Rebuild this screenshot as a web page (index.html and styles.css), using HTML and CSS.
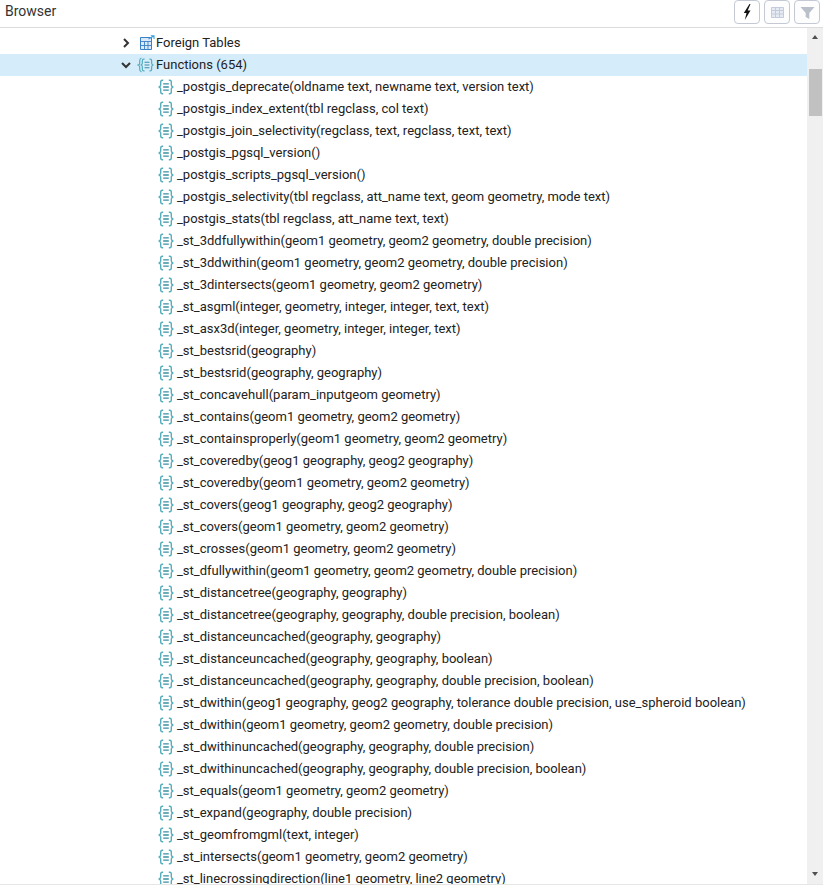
FILE: index.html
```html
<!DOCTYPE html>
<html lang="en">
<head>
<meta charset="utf-8">
<title>Browser</title>
<link rel="stylesheet" href="styles.css">
</head>
<body>
<svg class="defs" width="0" height="0" aria-hidden="true">
  <symbol id="fn" viewBox="0 0 16 16">
    <path d="M5.200 1.200H4.300C3 1.200 2.700 2 2.700 3.200V6C2.700 7 2.100 7.700.7 8C2.100 8.300 2.700 9 2.700 10V12.800C2.700 14 3 14.800 4.300 14.800H5.200M10.800 1.200H11.700C13 1.200 13.300 2 13.300 3.200V6C13.300 7 13.900 7.700 15.300 8C13.900 8.300 13.300 9 13.300 10V12.800C13.300 14 13 14.800 11.700 14.800H10.800" fill="none" stroke="#55aebc" stroke-width="1.400"/>
    <path d="M5.200 4.800H10.800M5.200 8H10.800M5.200 11.200H10.800" fill="none" stroke="#3a8fa3" stroke-width="1.300"/>
  </symbol>
</svg>
<div class="panel">
  <header class="bar">
    <span class="title">Browser</span>
    <div class="tools">
      <button class="tool"><svg width="16" height="18" viewBox="0 0 16 18"><path d="M10.500 1 4.800 10H7.500L5.800 17 11.500 7.500H8.700L11.500 1Z" fill="#111"/></svg></button>
      <button class="tool off"><svg width="15" height="15" viewBox="0 0 15 15"><path d="M1.500 2.500H13.500V12.500H1.500ZM1.500 5.500H13.500M1.500 9H13.500M5.500 2.500V12.500M9.500 2.500V12.500" fill="#e6eaf3" stroke="#c3cbdc"/></svg></button>
      <button class="tool off"><svg width="15" height="15" viewBox="0 0 15 15"><path d="M.5 2H14.500L9.300 8V14L5.700 12V8Z" fill="#b9c0ca"/></svg></button>
    </div>
  </header>
  <div class="body">
    <div class="tree">
      <div class="row lvl1">
        <svg class="chev" width="10" height="10" viewBox="0 0 10 10"><path d="M3 1 7 5 3 9" fill="none" stroke="#333" stroke-width="2"/></svg>
        <svg class="ic" width="16" height="16" viewBox="0 0 16 16"><path d="M1.500 2.500H12.500V14.500H1.500Z" fill="#dbe9f9" stroke="#3a80c4"/><path d="M1.500 6.500H12.500M5.500 6.500V14.500M9 6.500V14.500M1.500 10.500H12.500" fill="none" stroke="#3a80c4" stroke-width=".9"/><path d="M9.500 4 14.800 1M11.800 .8H15V4" fill="none" stroke="#39a0dc" stroke-width="1.100"/></svg>
        <span>Foreign Tables</span>
      </div>
      <div class="row lvl1 sel">
        <svg class="chev" width="10" height="10" viewBox="0 0 10 10"><path d="M1 3 5 7 9 3" fill="none" stroke="#333" stroke-width="2"/></svg>
        <svg class="ic" width="18" height="16" viewBox="0 0 18 16"><path d="M4.500 1C2.800 1.500 2.700 3 2.700 4V6C2.700 7 2.100 7.700 1 8C2.100 8.300 2.700 9 2.700 10V12C2.700 13 2.800 14.500 4.500 15" fill="none" stroke="#55aebc" stroke-width="1.200"/><use href="#fn" x="3" y="1" width="14" height="14"/></svg>
        <span class="fn-label">Functions (654)</span>
      </div>
      <div class="row lvl2"><svg class="ic"><use href="#fn"/></svg><span>_postgis_deprecate(oldname text, newname text, version text)</span></div>
      <div class="row lvl2"><svg class="ic"><use href="#fn"/></svg><span>_postgis_index_extent(tbl regclass, col text)</span></div>
      <div class="row lvl2"><svg class="ic"><use href="#fn"/></svg><span>_postgis_join_selectivity(regclass, text, regclass, text, text)</span></div>
      <div class="row lvl2"><svg class="ic"><use href="#fn"/></svg><span>_postgis_pgsql_version()</span></div>
      <div class="row lvl2"><svg class="ic"><use href="#fn"/></svg><span>_postgis_scripts_pgsql_version()</span></div>
      <div class="row lvl2"><svg class="ic"><use href="#fn"/></svg><span>_postgis_selectivity(tbl regclass, att_name text, geom geometry, mode text)</span></div>
      <div class="row lvl2"><svg class="ic"><use href="#fn"/></svg><span>_postgis_stats(tbl regclass, att_name text, text)</span></div>
      <div class="row lvl2"><svg class="ic"><use href="#fn"/></svg><span>_st_3ddfullywithin(geom1 geometry, geom2 geometry, double precision)</span></div>
      <div class="row lvl2"><svg class="ic"><use href="#fn"/></svg><span>_st_3ddwithin(geom1 geometry, geom2 geometry, double precision)</span></div>
      <div class="row lvl2"><svg class="ic"><use href="#fn"/></svg><span>_st_3dintersects(geom1 geometry, geom2 geometry)</span></div>
      <div class="row lvl2"><svg class="ic"><use href="#fn"/></svg><span>_st_asgml(integer, geometry, integer, integer, text, text)</span></div>
      <div class="row lvl2"><svg class="ic"><use href="#fn"/></svg><span>_st_asx3d(integer, geometry, integer, integer, text)</span></div>
      <div class="row lvl2"><svg class="ic"><use href="#fn"/></svg><span>_st_bestsrid(geography)</span></div>
      <div class="row lvl2"><svg class="ic"><use href="#fn"/></svg><span>_st_bestsrid(geography, geography)</span></div>
      <div class="row lvl2"><svg class="ic"><use href="#fn"/></svg><span>_st_concavehull(param_inputgeom geometry)</span></div>
      <div class="row lvl2"><svg class="ic"><use href="#fn"/></svg><span>_st_contains(geom1 geometry, geom2 geometry)</span></div>
      <div class="row lvl2"><svg class="ic"><use href="#fn"/></svg><span>_st_containsproperly(geom1 geometry, geom2 geometry)</span></div>
      <div class="row lvl2"><svg class="ic"><use href="#fn"/></svg><span>_st_coveredby(geog1 geography, geog2 geography)</span></div>
      <div class="row lvl2"><svg class="ic"><use href="#fn"/></svg><span>_st_coveredby(geom1 geometry, geom2 geometry)</span></div>
      <div class="row lvl2"><svg class="ic"><use href="#fn"/></svg><span>_st_covers(geog1 geography, geog2 geography)</span></div>
      <div class="row lvl2"><svg class="ic"><use href="#fn"/></svg><span>_st_covers(geom1 geometry, geom2 geometry)</span></div>
      <div class="row lvl2"><svg class="ic"><use href="#fn"/></svg><span>_st_crosses(geom1 geometry, geom2 geometry)</span></div>
      <div class="row lvl2"><svg class="ic"><use href="#fn"/></svg><span>_st_dfullywithin(geom1 geometry, geom2 geometry, double precision)</span></div>
      <div class="row lvl2"><svg class="ic"><use href="#fn"/></svg><span>_st_distancetree(geography, geography)</span></div>
      <div class="row lvl2"><svg class="ic"><use href="#fn"/></svg><span>_st_distancetree(geography, geography, double precision, boolean)</span></div>
      <div class="row lvl2"><svg class="ic"><use href="#fn"/></svg><span>_st_distanceuncached(geography, geography)</span></div>
      <div class="row lvl2"><svg class="ic"><use href="#fn"/></svg><span>_st_distanceuncached(geography, geography, boolean)</span></div>
      <div class="row lvl2"><svg class="ic"><use href="#fn"/></svg><span>_st_distanceuncached(geography, geography, double precision, boolean)</span></div>
      <div class="row lvl2"><svg class="ic"><use href="#fn"/></svg><span>_st_dwithin(geog1 geography, geog2 geography, tolerance double precision, use_spheroid boolean)</span></div>
      <div class="row lvl2"><svg class="ic"><use href="#fn"/></svg><span>_st_dwithin(geom1 geometry, geom2 geometry, double precision)</span></div>
      <div class="row lvl2"><svg class="ic"><use href="#fn"/></svg><span>_st_dwithinuncached(geography, geography, double precision)</span></div>
      <div class="row lvl2"><svg class="ic"><use href="#fn"/></svg><span>_st_dwithinuncached(geography, geography, double precision, boolean)</span></div>
      <div class="row lvl2"><svg class="ic"><use href="#fn"/></svg><span>_st_equals(geom1 geometry, geom2 geometry)</span></div>
      <div class="row lvl2"><svg class="ic"><use href="#fn"/></svg><span>_st_expand(geography, double precision)</span></div>
      <div class="row lvl2"><svg class="ic"><use href="#fn"/></svg><span>_st_geomfromgml(text, integer)</span></div>
      <div class="row lvl2"><svg class="ic"><use href="#fn"/></svg><span>_st_intersects(geom1 geometry, geom2 geometry)</span></div>
      <div class="row lvl2"><svg class="ic"><use href="#fn"/></svg><span>_st_linecrossingdirection(line1 geometry, line2 geometry)</span></div>
    </div>
    <div class="scroll">
      <div class="arrow up"></div>
      <div class="track"><div class="thumb"></div></div>
      <div class="arrow down"></div>
    </div>
  </div>
  <div class="foot"></div>
</div>
</body>
</html>
```
FILE: styles.css
```css
* { box-sizing: border-box; }
html, body { margin: 0; height: 100%; overflow: hidden; background: #fff; }
body { font-family: Roboto, "Liberation Sans", sans-serif; font-size: 13px; color: #222; }
.defs { position: absolute; }
.panel { height: 885px; display: flex; flex-direction: column; }
.bar {
  height: 28px; flex: none; display: flex; align-items: flex-start; justify-content: space-between;
  padding: 0 3px 0 5px; border-bottom: 1px solid #dcdcdc;
}
.title { font-size: 14px; line-height: 22px; color: #333; }
.tools { display: flex; gap: 4px; }
.tool {
  width: 26px; height: 24px; padding: 0; display: flex; align-items: center; justify-content: center;
  background: #fff; border: 1px solid #c4c9d4; border-radius: 4px;
}
.tool.off { background: #fdfdfd; }
.body { flex: 1; min-height: 0; display: flex; }
.tree { flex: 1; min-width: 0; overflow: hidden; padding-top: 4px; }
.row { height: 22px; display: flex; align-items: center; white-space: nowrap; line-height: 22px; }
.row.sel { background: #d5ecfb; }
.lvl1 { padding-left: 121px; }
.lvl2 { padding-left: 158px; }
.chev { margin-right: 8px; flex: none; }
.ic { width: 16px; height: 16px; flex: none; margin-right: 3px; }
.lvl1 .ic { width: auto; margin-right: 1px; }
.lvl1.sel .ic { margin-left: -2px; }
.scroll { width: 16px; flex: none; display: flex; flex-direction: column; background: #f0f0f0; }
.arrow { height: 0; width: 0; flex: none; margin: 7px 0 0 5px; border-left: 3.5px solid transparent; border-right: 3.5px solid transparent; }
.arrow.up { border-bottom: 4px solid #505050; }
.arrow.down { border-top: 4px solid #505050; margin: 0 0 8px 5px; }
.track { flex: 1; padding: 30px 1px 0 2px; }
.thumb { height: 47px; background: #c1c1c1; }
.foot { height: 1px; flex: none; background: #e6e6e6; }
```
